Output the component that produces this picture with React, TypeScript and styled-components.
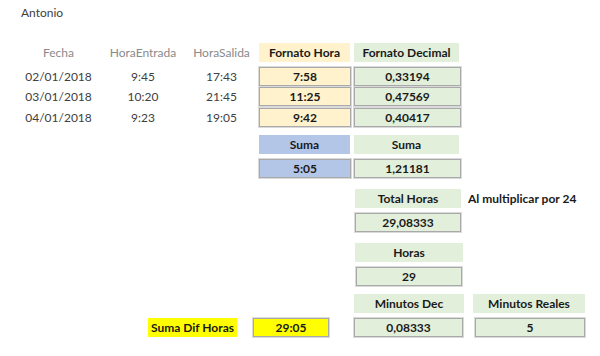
import React from 'react';
import styled, { createGlobalStyle } from 'styled-components';

const GlobalStyle = createGlobalStyle`
  html, body {
    margin: 0;
    padding: 0;
    background: #ffffff;
  }
  body {
    font-family: Lato, "Open Sans", sans-serif;
    color: #262626;
  }
`;

const fills = {
  none: 'transparent',
  gold: '#fff2cc',
  green: '#e2efda',
  blue: '#b4c6e7',
  yellow: '#ffff00',
};

type Fill = keyof typeof fills;

const Page = styled.div`
  width: 600px;
  height: 356px;
  overflow: hidden;
  background: #fff;
`;

const Title = styled.div`
  height: 43px;
  padding-left: 21px;
  box-sizing: border-box;
  padding-top: 5px;
  font-size: 12px;
  color: #404040;
`;

const Sheet = styled.div`
  display: grid;
  grid-template-columns: 21px 75px 94px 63px 100px 113px 124px;
  grid-template-rows: 24px 20px 21px 27px 24px 30px 24px 30px 24px 27px 24px 20px;
`;

const Plain = styled.div<{ $col: number; $row: number; $muted?: boolean }>`
  grid-column: ${(p) => p.$col};
  grid-row: ${(p) => p.$row};
  height: 19px;
  line-height: 19px;
  text-align: center;
  font-size: 12px;
  color: ${(p) => (p.$muted ? '#8a8a8a' : '#404040')};
  white-space: nowrap;
`;

const Note = styled.div<{ $col: number; $row: number }>`
  grid-column: ${(p) => p.$col};
  grid-row: ${(p) => p.$row};
  height: 19px;
  line-height: 19px;
  padding-left: 2px;
  font-size: 12px;
  font-weight: 700;
  color: #1a1a1a;
  white-space: nowrap;
`;

const Cell = styled.div<{
  $col: number;
  $row: number;
  $fill: Fill;
  $w: number;
  $ml?: number;
  $boxed?: boolean;
  $span?: number;
  $justify?: string;
}>`
  grid-column: ${(p) => p.$col} / span ${(p) => p.$span ?? 1};
  grid-row: ${(p) => p.$row};
  justify-self: ${(p) => p.$justify ?? 'start'};
  margin-left: ${(p) => p.$ml ?? 0}px;
  width: ${(p) => p.$w}px;
  height: 19px;
  box-sizing: border-box;
  background: ${(p) => fills[p.$fill]};
  border: ${(p) => (p.$boxed ? '1px solid #a9a9a9' : 'none')};
  box-shadow: ${(p) => (p.$boxed ? '0 0 0 1px #dadada' : 'none')};
  display: flex;
  align-items: center;
  justify-content: center;
  font-size: 12px;
  font-weight: 700;
  color: #1a1a1a;
  white-space: nowrap;
`;

const rows = [
  { fecha: '02/01/2018', entrada: '9:45', salida: '17:43', hora: '7:58', dec: '0,33194' },
  { fecha: '03/01/2018', entrada: '10:20', salida: '21:45', hora: '11:25', dec: '0,47569' },
  { fecha: '04/01/2018', entrada: '9:23', salida: '19:05', hora: '9:42', dec: '0,40417' },
];

export default function App() {
  return (
    <Page>
      <GlobalStyle />
      <Title>Antonio</Title>
      <Sheet>
        <Plain $col={2} $row={1} $muted>Fecha</Plain>
        <Plain $col={3} $row={1} $muted>HoraEntrada</Plain>
        <Plain $col={4} $row={1} $muted>HoraSalida</Plain>
        <Cell $col={5} $row={1} $fill="gold" $w={91} $ml={6}>Fornato Hora</Cell>
        <Cell $col={6} $row={1} $fill="green" $w={105} $ml={1}>Fornato Decimal</Cell>

        {rows.map((r, i) => (
          <React.Fragment key={r.fecha}>
            <Plain $col={2} $row={i + 2}>{r.fecha}</Plain>
            <Plain $col={3} $row={i + 2}>{r.entrada}</Plain>
            <Plain $col={4} $row={i + 2}>{r.salida}</Plain>
            <Cell $col={5} $row={i + 2} $fill="gold" $w={92} $ml={6} $boxed>{r.hora}</Cell>
            <Cell $col={6} $row={i + 2} $fill="green" $w={107} $ml={1} $boxed>{r.dec}</Cell>
          </React.Fragment>
        ))}

        <Cell $col={5} $row={5} $fill="blue" $w={91} $ml={6}>Suma</Cell>
        <Cell $col={6} $row={5} $fill="green" $w={105} $ml={1}>Suma</Cell>
        <Cell $col={5} $row={6} $fill="blue" $w={92} $ml={6} $boxed>5:05</Cell>
        <Cell $col={6} $row={6} $fill="green" $w={107} $ml={1} $boxed>1,21181</Cell>

        <Cell $col={6} $row={7} $fill="green" $w={106} $ml={2}>Total Horas</Cell>
        <Note $col={7} $row={7}>Al multiplicar por 24</Note>
        <Cell $col={6} $row={8} $fill="green" $w={106} $ml={2} $boxed>29,08333</Cell>

        <Cell $col={6} $row={9} $fill="green" $w={108} $ml={2}>Horas</Cell>
        <Cell $col={6} $row={10} $fill="green" $w={106} $ml={3} $boxed>29</Cell>

        <Cell $col={6} $row={11} $fill="green" $w={110} $ml={1}>Minutos Dec</Cell>
        <Cell $col={7} $row={11} $fill="green" $w={112} $ml={7}>Minutos Reales</Cell>

        <Cell $col={3} $row={12} $span={2} $fill="yellow" $w={89} $ml={52}>Suma Dif Horas</Cell>
        <Cell $col={5} $row={12} $fill="yellow" $w={76} $boxed>29:05</Cell>
        <Cell $col={6} $row={12} $fill="green" $w={109} $ml={1} $boxed>0,08333</Cell>
        <Cell $col={7} $row={12} $fill="green" $w={110} $ml={9} $boxed>5</Cell>
      </Sheet>
    </Page>
  );
}
